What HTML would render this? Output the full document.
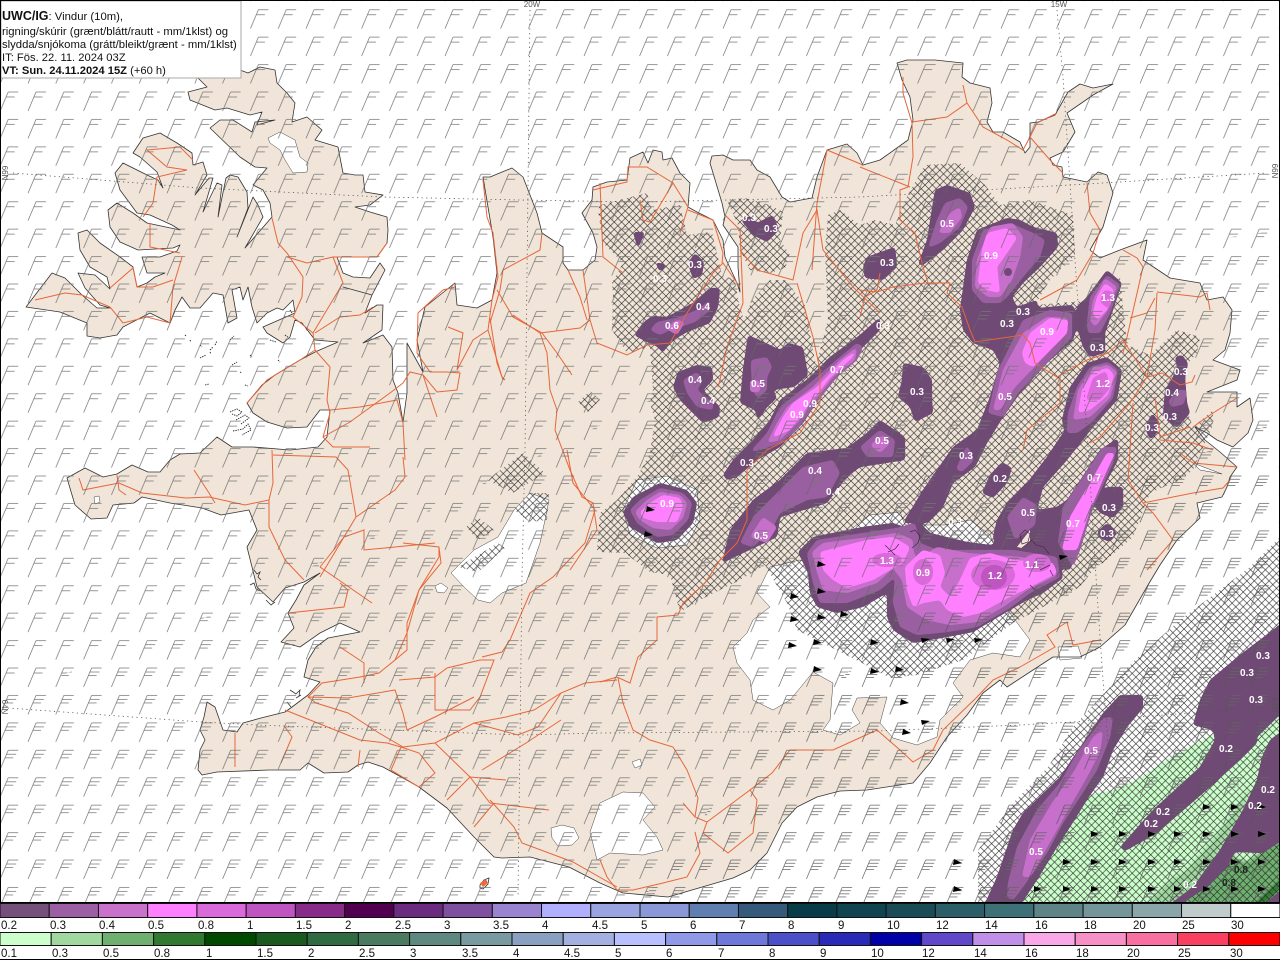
<!DOCTYPE html>
<html><head><meta charset="utf-8"><title>UWC/IG</title>
<style>
html,body{margin:0;padding:0;background:#fff}
svg{display:block;font-family:"Liberation Sans",sans-serif}
.l0{fill:#6f4a74}.l1{fill:#9a5fa0}.l2{fill:#c66fcb}.l3{fill:#ff80ff}.l4{fill:#d96ad9}.l5{fill:#bf55c0}
.v text{font-size:10px;font-weight:bold;fill:#fff;text-anchor:middle}
.r polyline{fill:none;stroke:#e8663a;stroke-width:1}
.g polygon{fill:#fff;stroke:#444;stroke-width:.5}
.p{fill:#000}
.lg{font-size:11.5px;fill:#111}
.gt{font-size:8px;fill:#555}
</style></head><body>
<svg xmlns="http://www.w3.org/2000/svg" width="1280" height="960" viewBox="0 0 1280 960">
<defs>
<filter id="sm" filterUnits="userSpaceOnUse" x="-20" y="-20" width="1330" height="950" color-interpolation-filters="sRGB"><feGaussianBlur stdDeviation="1.8"/><feColorMatrix type="matrix" values="1 0 0 0 0 0 1 0 0 0 0 0 1 0 0 0 0 0 14 -6"/></filter>
<pattern id="hat" width="7.4" height="7.4" patternUnits="userSpaceOnUse"><path d="M0 0L7.4 7.4M7.4 0L0 7.4" stroke="#1a1a1a" stroke-width=".6" fill="none"/></pattern>
<pattern id="b2" x="26" y="90" width="27.8" height="27.43" patternUnits="userSpaceOnUse"><path d="M2 21L10 2" stroke="#666" stroke-width=".65" fill="none"/><path d="M10 2H20M8 7H16.5" stroke="#777" stroke-width=".75" fill="none"/></pattern>
<pattern id="b3" x="26" y="90" width="27.8" height="27.43" patternUnits="userSpaceOnUse"><path d="M2 21L10 2" stroke="#666" stroke-width=".65" fill="none"/><path d="M10 2H20M8.3 6H18M6.9 9.5H15" stroke="#777" stroke-width=".75" fill="none"/></pattern>
<pattern id="b4" x="26" y="90" width="27.8" height="27.43" patternUnits="userSpaceOnUse"><path d="M2 21L10 2" stroke="#555" stroke-width=".65" fill="none"/><path d="M10 2H20M8.6 5.2H18.6M7.3 8.4H17.3M6 11.5H14" stroke="#666" stroke-width=".75" fill="none"/></pattern>
<polygon id="land" points="67,478 85,468 103,477 117,474 132,465 148,472 160,472 170,460 180,454 200,453 217,437 232,447 253,447 290,450 318,447 327,437 330,410 320,410 307,427 287,428 267,422 253,413 247,403 262,385 275,375 300,360 315,352 338,342 315,340 302,323 295,320 290,337 283,343 267,333 263,327 295,313 293,300 283,310 277,308 267,313 257,323 252,307 248,287 243,300 240,287 232,290 237,318 228,323 223,295 213,293 200,308 190,308 182,297 175,310 170,323 150,313 123,327 117,335 100,338 87,336 87,323 60,312 26,307 52,273 65,278 82,295 97,308 110,308 100,305 85,288 78,273 95,275 110,289 107,277 90,267 80,250 78,233 87,230 100,243 120,257 133,267 137,287 147,283 155,277 165,273 147,273 142,257 160,257 177,251 180,245 173,248 138,250 120,242 110,227 108,210 117,203 133,213 147,223 180,230 172,225 150,215 137,213 120,190 115,173 123,163 147,175 158,180 163,188 157,172 140,157 133,153 143,138 160,133 177,143 192,153 193,165 203,162 207,175 195,195 209,178 213,178 203,212 217,183 222,185 218,217 226,178 230,175 238,177 247,192 248,208 237,237 253,197 258,205 263,217 245,248 272,217 270,203 263,190 253,185 267,168 255,167 240,157 210,128 220,120 233,120 252,132 255,122 275,120 257,125 262,112 250,115 227,108 215,110 190,100 188,92 207,87 198,78 205,70 240,70 248,73 260,67 275,70 277,83 287,93 295,103 292,122 307,117 322,130 315,140 338,147 343,173 355,175 363,175 365,192 383,195 370,205 355,207 370,212 387,217 388,230 387,243 377,257 353,257 337,257 343,273 353,277 370,278 380,263 385,270 372,295 343,287 372,295 365,313 377,305 383,305 382,330 363,343 383,335 392,347 393,380 398,393 403,422 407,393 407,343 423,372 417,340 425,307 455,283 457,305 477,308 492,300 497,273 493,237 483,177 490,177 512,168 523,177 537,213 542,233 563,247 563,263 568,270 583,270 595,260 597,247 593,233 582,213 592,200 593,187 607,182 627,180 630,158 643,152 648,163 653,150 662,152 663,160 672,158 680,173 690,183 688,207 697,212 713,220 723,240 725,257 737,283 740,292 738,267 738,247 723,225 725,217 722,203 710,163 712,156 723,155 733,160 750,160 757,170 770,177 782,197 790,202 812,198 817,177 827,150 847,144 857,153 863,165 880,160 908,140 913,120 910,97 902,80 897,63 907,60 935,60 963,63 962,77 970,83 990,88 992,103 987,122 993,132 1003,132 1020,142 1025,153 1030,147 1030,123 1038,122 1055,115 1068,92 1080,84 1093,88 1113,84 1093,95 1083,102 1067,113 1075,132 1063,152 1050,158 1053,165 1062,167 1063,177 1087,182 1098,172 1107,175 1113,193 1103,227 1090,250 1100,258 1120,250 1147,240 1143,260 1170,278 1200,283 1207,300 1223,297 1232,310 1230,333 1225,350 1213,360 1240,370 1237,380 1207,392 1237,392 1237,407 1250,398 1253,420 1248,433 1233,447 1217,440 1207,433 1195,427 1205,440 1220,452 1237,467 1230,477 1227,487 1222,497 1197,503 1200,518 1177,540 1160,565 1148,585 1125,625 1100,647 1080,657 1053,657 1033,670 1007,687 1000,680 983,693 967,715 947,737 930,763 913,783 867,790 840,791 817,797 797,807 782,823 767,853 750,870 733,878 668,897 623,893 600,883 569,867 530,857 502,858 494,857 474,837 447,808 419,787 403,778 383,767 368,762 358,765 348,772 324,773 308,763 300,770 269,770 217,772 202,775 198,770 200,750 205,740 200,730 204,717 207,702 215,707 223,730 237,732 243,723 261,718 285,712 292,707 308,695 320,682 304,677 308,660 316,647 328,638 360,632 340,623 320,633 300,647 281,642 294,628 288,613 296,600 304,585 320,573 304,582 285,588 273,602 257,587 251,563 247,547 257,530 249,510 221,515 202,508 170,503 142,497 134,503 113,505 107,518 91,519 75,505"/>
<clipPath id="z2"><polygon points="0,0 1280,0 1280,230 900,285 650,400 450,500 200,620 0,700"/></clipPath>
<clipPath id="z3"><polygon points="1280,230 900,285 650,400 450,500 200,620 0,700 0,903 640,903 760,740 890,640 1050,520 1280,420"/></clipPath>
<clipPath id="z4"><polygon points="640,903 760,740 890,640 1050,520 1280,420 1280,903"/></clipPath>
</defs>

<rect width="1280" height="903" fill="#fff"/>
<use href="#land" fill="#f0e5d8"/>

<!-- glaciers -->
<g class="g">
<polygon points="268,138 280,132 295,140 300,157 308,163 307,172 293,173 285,160 280,150 270,143"/>
<polygon points="451,573 474,550 498,537 514,510 530,493 549,500 545,520 540,543 526,583 502,593 490,603 478,600 464,587"/>
<polygon points="623,510 637,480 667,476 697,490 700,520 687,545 657,548 630,535"/>
<polygon points="770,567 757,593 770,607 753,620 747,633 733,647 737,663 750,680 753,700 773,710 790,700 800,688 813,672 833,683 830,720 823,730 840,735 860,723 852,710 857,698 887,697 880,723 893,738 917,745 937,737 940,720 950,710 963,697 953,683 970,660 993,653 1020,657 1030,640 1000,600 890,590 800,560"/>
<polygon points="850,530 870,515 900,512 905,525 945,525 970,520 990,535 995,548 1010,550 1030,560 1000,570 900,570 850,560"/>
<polygon points="600,803 623,792 643,793 655,807 643,820 657,837 663,850 643,855 610,853 597,860 590,832"/>
<polygon points="551,828 562,825 574,828 579,838 572,845 558,846 552,838"/>
<polygon points="632,762 640,759 642,765 635,768"/>
<polygon points="435,586 441,583 448,588 444,593 437,592"/>
<polygon points="94,497 99,496 100,502 95,504"/>
<polygon points="1058,647 1078,646 1082,658 1060,660"/>
</g>

<!-- green rain -->
<g filter="url(#sm)">
<polygon fill="#ccffcc" points="1018,910 1037,880 1057,847 1070,827 1090,795 1113,790 1137,780 1167,760 1193,745 1212,735 1250,720 1290,700 1290,910"/>
<polygon fill="#a0d8a0" points="1140,910 1167,883 1187,870 1213,840 1233,813 1250,787 1243,810 1220,850 1193,887 1165,910"/>
<polygon fill="#6fb070" points="1172,910 1193,887 1207,887 1230,853 1235,852 1233,858 1247,862 1273,843 1290,835 1290,870 1257,897 1245,910"/>
<polygon fill="#2f7a30" points="1245,910 1290,870 1290,880 1260,910"/>
</g>

<!-- hatching -->
<g fill="url(#hat)">
<polygon points="600,205 647,193 652,210 680,205 687,235 712,232 722,275 735,280 738,300 744,320 752,300 770,280 785,280 805,305 812,345 816,365 820,350 828,320 825,250 828,215 840,210 860,225 875,220 895,225 905,200 925,165 960,163 985,185 1000,205 1030,200 1073,215 1075,255 1050,280 1035,305 1095,300 1120,277 1127,345 1150,355 1177,330 1200,337 1197,353 1175,378 1193,427 1213,410 1213,425 1193,470 1180,480 1150,493 1133,537 1103,563 1097,565 1080,587 1060,597 1043,607 1013,623 963,660 917,675 890,678 862,663 797,630 787,603 765,565 740,580 720,590 700,600 680,612 670,575 650,572 625,553 600,552 597,550 600,513 617,500 637,477 650,453 655,420 650,403 653,390 650,347 627,353 612,330 613,293 612,283 623,263 603,243 598,210"/>
<polygon points="727,200 745,198 770,205 783,212 780,240 790,255 785,268 770,273 750,270 740,250 738,225"/>
<polygon points="487,480 523,453 545,473 513,493"/>
<polygon points="514,510 530,493 549,493 547,520 530,522"/>
<polygon points="458,567 498,543 505,548 478,572"/>
<polygon points="466,527 478,517 494,530 478,540"/>
<polygon points="578,402 590,391 600,400 588,412"/>
<polygon points="1280,537 1250,567 1180,620 1135,660 1098,700 1073,727 1048,767 1013,803 978,850 978,903 1280,903"/>
</g>

<!-- snow/sleet shades -->
<g>
<g class="l0" filter="url(#sm)">
<polygon points="634,335 643,323 652,316 667,317 693,303 710,288 720,288 718,307 710,323 687,332 670,342 663,353 658,347 643,340"/>
<polygon points="741,220 750,216 757,223 773,215 779,230 767,242 753,235"/>
<polygon points="688,263 695,253 704,262 702,275 693,279"/>
<polygon points="633,232 645,232 638,249"/>
<polygon points="655,262 667,265 660,272"/>
<polygon points="673,387 678,372 697,365 712,367 713,380 703,390 720,407 719,417 703,423 680,400"/>
<polygon points="748,335 770,345 780,350 788,343 803,347 808,375 793,387 773,390 777,398 767,407 758,420 755,410 740,403 743,370"/>
<polygon points="723,475 733,460 753,440 770,420 780,400 807,380 830,357 860,335 880,317 880,330 863,347 843,370 820,397 803,423 780,447 757,460 737,477 727,480"/>
<polygon points="722,563 730,530 753,500 780,480 807,453 847,448 867,433 880,420 905,437 905,460 860,467 847,477 827,503 780,517 777,537 743,553"/>
<polygon points="623,512 633,497 660,483 687,490 697,503 693,523 677,540 657,543 630,527"/>
<polygon points="918,265 927,240 935,190 947,185 970,193 975,207 963,230 943,250 923,265"/>
<polygon points="863,267 867,257 895,247 897,267 883,280 865,278"/>
<polygon points="960,310 967,260 977,230 1007,218 1020,220 1033,227 1057,233 1058,247 1040,267 1023,283 1012,297 1017,307 1037,300 1038,308 1033,333 993,350 973,343 963,330"/>
<polygon points="1038,308 1073,305 1078,323 1073,340 1047,363 1020,393 1003,417 987,443 975,467 953,483 943,507 927,523 903,523 923,490 953,447 977,430 990,397 1000,363 993,350"/>
<polygon points="1077,307 1087,297 1107,270 1122,283 1113,310 1105,333 1105,353 1090,357 1083,347 1077,327"/>
<polygon points="1067,443 1062,420 1070,387 1087,363 1107,357 1122,370 1117,400 1093,427 1077,440"/>
<polygon points="993,537 997,520 1007,503 1027,483 1047,457 1063,433 1093,420 1093,427 1067,460 1043,487 1037,510 1057,507 1067,500 1087,470 1100,450 1118,438 1118,460 1093,507 1083,537 1070,570 1000,560"/>
<polygon points="903,363 923,367 932,380 932,400 933,413 915,422 910,407 898,397 902,380"/>
<polygon points="982,493 990,475 1002,462 1012,468 1007,483 993,498"/>
<polygon points="1107,487 1123,487 1123,507 1113,518 1100,513 1092,502"/>
<polygon points="1097,532 1107,523 1117,533 1110,542 1100,538"/>
<polygon points="1175,357 1182,355 1188,363 1185,378 1187,403 1190,413 1177,428 1163,417 1165,390 1173,377 1177,367"/>
<polygon points="1145,428 1152,413 1160,423 1157,433 1150,440"/>
<polygon points="798,552 813,537 863,527 893,523 907,528 920,523 930,533 967,542 990,545 1003,542 1030,543 1060,540 1057,550 1063,578 1043,593 1027,600 993,620 973,632 947,637 913,643 893,630 887,617 887,593 863,607 837,613 817,607 810,593 808,573"/>
<polygon points="982,910 997,877 1013,830 1023,813 1060,777 1087,737 1103,713 1120,695 1143,695 1143,708 1127,727 1113,750 1103,777 1090,795 1070,827 1057,847 1037,880 1017,910"/>
<polygon points="1193,725 1213,730 1215,740 1200,767 1153,810 1120,847 1125,851 1157,833 1180,813 1210,787 1240,760 1257,743 1257,737 1290,705 1290,617 1240,655 1210,680 1200,700"/>
<polygon points="1270,740 1290,725 1290,835 1263,853 1235,852 1227,867 1207,887 1172,910 1162,910 1193,887 1220,850 1243,810 1257,780 1262,757"/>
<polygon points="1258,910 1290,882 1290,910"/>
</g>
<g class="l1" filter="url(#sm)">
<polygon points="650,330 657,322 677,318 697,310 710,300 710,310 695,322 670,330 660,335"/>
<polygon points="683,380 697,372 703,380 697,390 713,403 713,410 697,407 687,393"/>
<polygon points="751,360 767,357 772,367 767,377 767,390 758,398 752,390"/>
<polygon points="750,452 767,433 780,407 810,383 840,357 857,343 863,347 857,360 837,377 813,407 797,430 780,443 760,450"/>
<polygon points="740,543 753,517 780,490 803,467 833,460 840,473 827,497 807,500 780,513 773,527 753,547"/>
<polygon points="860,447 880,430 895,440 893,457 867,457"/>
<polygon points="630,510 640,500 660,488 683,493 692,503 688,520 673,535 657,537 637,523"/>
<polygon points="928,248 937,220 945,203 960,198 968,207 960,227 940,243"/>
<polygon points="972,290 972,260 983,230 1010,223 1033,233 1045,240 1040,257 1023,277 1007,297 1000,303 983,303"/>
<polygon points="988,413 998,370 1023,320 1050,310 1072,313 1072,337 1047,363 1018,393 1003,417"/>
<polygon points="1087,323 1090,297 1107,275 1120,285 1110,313 1100,333 1088,333"/>
<polygon points="1067,433 1068,413 1077,387 1090,367 1108,362 1118,370 1113,398 1092,422 1077,433"/>
<polygon points="956,469 967,445 974,460 962,472"/>
<polygon points="1007,517 1023,497 1037,505 1035,525 1015,540"/>
<polygon points="1058,543 1063,507 1083,477 1103,447 1117,447 1113,463 1093,507 1080,550 1073,567"/>
<polygon points="807,553 817,540 870,532 897,528 915,523 920,543 937,550 967,550 1013,550 1057,557 1060,577 1030,593 1010,608 977,627 947,632 917,635 900,627 893,603 895,577 880,590 847,603 820,603 813,583"/>
<polygon points="1008,883 1017,847 1037,810 1060,783 1077,753 1103,718 1113,717 1110,737 1097,770 1080,797 1063,823 1047,853 1023,887 1013,900 1007,897"/>
<polygon points="1168,402 1178,390 1187,390 1184,404 1172,407"/>
</g>
<g class="l2" filter="url(#sm)">
<polygon points="665,328 677,320 685,322 677,335"/>
<polygon points="750,380 760,381 760,392 750,392"/>
<polygon points="767,443 777,423 787,407 813,387 840,360 857,347 855,360 833,377 810,407 797,423 780,440"/>
<polygon points="750,537 763,517 777,527 767,543"/>
<polygon points="870,445 883,435 890,443 880,453"/>
<polygon points="635,512 647,500 660,492 680,495 687,503 683,518 670,530 653,528 640,520"/>
<polygon points="938,233 950,213 960,207 962,217 950,233"/>
<polygon points="975,287 977,260 990,227 1013,223 1023,237 1020,257 1012,280 1000,297 988,297"/>
<polygon points="993,410 1003,370 1023,333 1047,317 1068,318 1067,333 1043,358 1015,387 1000,410"/>
<polygon points="1090,320 1093,300 1105,278 1117,287 1108,310 1095,327"/>
<polygon points="1073,420 1078,390 1093,367 1108,365 1117,372 1110,398 1090,417"/>
<polygon points="812,552 823,543 870,537 897,533 913,540 913,550 917,560 937,547 967,553 993,555 1020,557 1053,563 1057,575 1027,590 1003,607 977,622 950,625 927,620 907,607 902,580 893,568 877,583 847,593 823,590 817,572"/>
<polygon points="1022,877 1030,840 1052,803 1075,770 1093,737 1103,730 1100,752 1087,777 1072,803 1053,837 1030,877"/>
</g>
<g class="l3" filter="url(#sm)">
<polygon points="772,438 783,417 793,403 817,387 843,360 857,350 853,357 830,378 810,403 790,430"/>
<polygon points="640,512 650,503 663,495 680,498 683,507 677,522 657,522 643,518"/>
<polygon points="978,283 982,250 987,233 1007,228 1017,238 1007,253 997,267 1000,293 987,290"/>
<polygon points="1022,353 1030,333 1050,318 1068,320 1067,333 1047,353 1033,367 1025,363"/>
<polygon points="1093,313 1097,297 1105,283 1114,290 1107,310 1097,320"/>
<polygon points="1078,413 1082,390 1093,372 1108,368 1114,375 1108,395 1090,410"/>
<polygon points="1062,550 1070,517 1090,483 1107,453 1115,453 1107,470 1090,510 1077,550"/>
<polygon points="820,552 867,540 893,537 910,547 903,563 890,570 873,580 847,588 833,580 823,570"/>
<polygon points="905,567 923,550 940,555 945,573 940,587 950,597 960,580 970,558 990,553 1013,560 1053,563 1057,573 1030,587 1010,597 980,613 963,617 947,610 940,600 923,603 913,607 907,590"/>
</g>
<g class="l4" filter="url(#sm)">
<polygon points="1100,302 1104,290 1114,292 1109,309"/>
<polygon points="1086,400 1093,378 1106,371 1110,388 1100,400"/>
<ellipse cx="993" cy="575" rx="22" ry="15"/><ellipse cx="887" cy="560" rx="15" ry="7"/><ellipse cx="923" cy="572" rx="10" ry="13"/><ellipse cx="1037" cy="563" rx="14" ry="9"/>
</g>
<g class="l5" filter="url(#sm)"><ellipse cx="994" cy="577" rx="13" ry="12"/></g>
<ellipse cx="1008" cy="272" rx="4" ry="4" fill="#6f4a74"/>
<polygon points="1017,547 1030,530 1030,541 1022,548" fill="#f0e5d8"/>
</g>

<!-- coast on top -->
<use href="#land" fill="none" stroke="#333" stroke-width=".8" stroke-linejoin="round"/>

<!-- coastal specks -->
<path d="M230,412l7,-3 5,3 -5,4 -5,-2M236,420l9,-5 4,3 -8,6M233,431l10,-2 5,-5 3,6 -9,5M210,352l1,2M190,340l1,2M200,345l2,2M210,350l3,-3M215,345l2,-4M230,340l4,-4M200,358l6,-3M185,335l1,1M232,365l5,-3M250,355l2,2M278,360l2,2M285,335l4,3M205,385l4,-1M240,372l2,1M290,310l2,3M270,340l6,2M245,385l3,1" stroke="#222" stroke-width=".9" stroke-dasharray="1.4 1" fill="none"/>
<path d="M254,570l3,4 3,-2 -2,5 3,3M250,585l4,-2 2,6 5,2M266,600l5,5 4,-3M290,690l6,4 4,-4 -1,6M296,698l5,-3M287,702l4,5M480,885l4,-5 5,-2 -1,6 -5,5 -3,-1z" stroke="#333" stroke-width=".8" fill="none"/>
<path d="M480,883l6,-4 2,4 -5,4z" fill="#e96a3c"/>
<polygon points="1193,463 1222,474 1200,470" fill="#fff" stroke="#333" stroke-width=".5"/>
<path d="M1020,535l5,-5 5,4 -2,8 -6,2zM1022,548l10,-8 4,5 8,2 5,7M910,532l5,-2 5,6 -2,7 -6,5M888,552l7,-3 4,-5M885,545l10,10M1040,570l10,-5M1030,585l5,5M1050,570l3,6" stroke="#4a2a4a" stroke-width=".7" fill="none"/>

<!-- roads -->
<g class="r">
<polyline points="35,300 65,293 82,295 110,307 123,323 147,317 170,323 173,287 182,257"/>
<polyline points="110,288 133,268 137,287 153,287 173,280"/>
<polyline points="150,223 150,247 180,253"/>
<polyline points="143,217 153,203 157,177 187,170 167,167 147,150 180,147 193,160"/>
<polyline points="272,218 278,243 287,253 303,277 302,297 293,317 313,333 343,283 333,257 307,263 287,257"/>
<polyline points="333,257 377,257 387,243"/>
<polyline points="315,350 330,367 327,400 330,413 323,437 333,447 370,447"/>
<polyline points="247,403 267,380 300,360 315,350"/>
<polyline points="315,333 340,317 360,315 373,307"/>
<polyline points="313,333 315,350"/>
<polyline points="330,410 360,407 397,400 403,423 405,460"/>
<polyline points="323,437 350,422 390,393 403,383 410,372 423,375 437,417"/>
<polyline points="423,375 437,392 457,390 460,373 447,372 430,372 417,353 418,313 443,290 455,287"/>
<polyline points="448,327 463,333 457,370 473,340 488,330 502,377 505,380"/>
<polyline points="488,330 492,300 498,277 493,233 487,217 483,180"/>
<polyline points="490,323 500,290 503,270 540,250 542,233"/>
<polyline points="490,318 497,363 503,380"/>
<polyline points="513,315 540,333 547,353 550,390 557,410 555,430 570,470 582,497 593,503 597,530 570,570"/>
<polyline points="540,333 580,328 590,320 583,270"/>
<polyline points="590,320 597,343 627,355 647,345 670,343 687,313 713,273 723,263 740,287"/>
<polyline points="497,290 513,317 542,333 557,353 572,375"/>
<polyline points="568,270 580,297 587,320"/>
<polyline points="600,183 603,257 623,273"/>
<polyline points="593,190 627,182 628,167 647,167 673,183 688,207 680,233"/>
<polyline points="640,200 643,220 650,222 673,183"/>
<polyline points="688,210 713,220 723,253 722,263"/>
<polyline points="725,215 740,230 742,277 743,303 727,347 720,380 718,387"/>
<polyline points="740,250 757,270 793,280 803,233 817,210 823,250 853,287 880,313"/>
<polyline points="812,270 817,203 827,150 863,165"/>
<polyline points="797,283 813,337 820,370 820,403 800,433 767,450 747,470 747,520 737,543 720,560 705,583 683,603 678,615 657,617 657,640 638,657 630,683 617,677 600,682"/>
<polyline points="618,678 623,703 633,730 650,740 673,747 687,770 698,798 695,817 707,822 703,833 728,853 753,833 757,800 750,790 772,773 790,750 833,750 877,730 900,750 913,762 933,750 943,730 977,697 993,680 1020,667"/>
<polyline points="707,822 750,790"/>
<polyline points="695,817 683,803"/>
<polyline points="695,832 700,853 687,877 663,883 633,890 617,890 607,877 600,860"/>
<polyline points="617,680 585,683 561,693 538,727 518,735 474,723 435,743 403,747 379,733 348,713 316,703 308,697 322,683 360,677 379,673 395,660 407,633 419,590 439,557 439,547 403,543"/>
<polyline points="308,697 348,698 395,690 403,713 407,730 435,717 474,697"/>
<polyline points="399,680 435,677 447,668 480,660 494,660 480,697 470,710 435,710 435,673"/>
<polyline points="474,723 506,717 534,710 561,693"/>
<polyline points="401,747 391,770 419,787 435,773 419,753 401,747"/>
<polyline points="435,743 470,777 490,803 549,810"/>
<polyline points="490,800 514,827 522,843 573,862 617,887"/>
<polyline points="447,800 470,777 506,780"/>
<polyline points="474,827 494,803"/>
<polyline points="482,770 526,743 561,720"/>
<polyline points="79,478 83,490 119,483 142,493 186,498 209,497 245,505 269,500 273,483 272,450"/>
<polyline points="117,475 119,490 126,495"/>
<polyline points="194,470 209,493 215,503"/>
<polyline points="269,500 269,527 285,560 304,580"/>
<polyline points="320,577 356,517 348,470 336,457 273,455"/>
<polyline points="356,517 395,490 405,477 403,457"/>
<polyline points="320,567 344,537 364,530 364,550 435,543"/>
<polyline points="439,547 441,563 419,590 407,623 407,650 395,660"/>
<polyline points="320,567 372,603"/>
<polyline points="288,613 344,607 348,590 340,583"/>
<polyline points="340,647 364,663 364,683"/>
<polyline points="567,450 573,483 595,510 585,543 553,577 530,593 510,640 502,652 482,657"/>
<polyline points="235,733 235,767"/>
<polyline points="285,727 292,737 281,763"/>
<polyline points="360,750 358,767"/>
<polyline points="285,710 360,740 387,743 401,747"/>
<polyline points="903,77 903,93 912,123 913,157 908,187 900,190 900,220 915,233 923,267 928,283 950,283 947,293 962,307 970,330 975,342 1023,335 1030,343 1035,363 1057,377 1087,360 1108,353 1123,340 1147,377"/>
<polyline points="912,122 947,117 967,103 963,85"/>
<polyline points="967,103 983,127 1007,140 1023,150 1030,137 1050,160 1063,173"/>
<polyline points="1030,137 1037,123 1057,113"/>
<polyline points="910,187 860,167"/>
<polyline points="925,283 893,287 877,292 860,290"/>
<polyline points="880,273 877,290 865,297 860,317"/>
<polyline points="1087,183 1090,213 1100,230 1093,253 1077,280 1040,300"/>
<polyline points="1123,250 1137,258 1143,267 1127,337 1123,353"/>
<polyline points="1157,293 1155,330 1147,377 1130,403 1100,437 1090,443"/>
<polyline points="1157,292 1200,297 1207,293 1210,310"/>
<polyline points="1130,318 1147,313 1155,298"/>
<polyline points="1148,377 1162,373 1180,385 1192,382 1195,375"/>
<polyline points="1155,397 1160,437 1190,427"/>
<polyline points="1193,427 1213,413 1237,398"/>
<polyline points="1160,440 1193,443 1213,450"/>
<polyline points="1180,453 1193,463 1237,467"/>
<polyline points="1133,403 1128,480 1143,503 1193,493 1223,488 1230,480"/>
<polyline points="1143,503 1153,513 1173,540 1147,570"/>
<polyline points="1060,377 1060,403 1027,430 1023,450"/>
<polyline points="1020,667 1055,647 1047,635 1067,622 1073,645 1100,640"/>
</g>

<!-- graticule -->
<g fill="none" stroke="#555" stroke-width=".8" stroke-dasharray="1.2 3.4">
<polyline points="13,173 200,188 383,197 520,200 640,202 860,197 1070,185 1267,173"/>
<polyline points="8,708 201,722 257,725 522,735 600,733 877,731 1020,725 1073,722 1267,707"/>
<polyline points="530,10 525,450 522,577 518,897"/>
<polyline points="1057,10 1063,77 1070,183 1075,260 1088,447 1097,593 1103,680 1110,770 1118,900"/>
</g>

<!-- wind barbs -->
<rect width="1280" height="903" fill="url(#b2)" clip-path="url(#z2)"/>
<rect width="1280" height="903" fill="url(#b3)" clip-path="url(#z3)"/>
<rect width="1280" height="903" fill="url(#b4)" clip-path="url(#z4)"/>

<!-- pennants -->
<g class="p">
<path d="M647,506l8,4 -9,2zM645,531l8,4 -9,2z"/>
<path d="M818,561l8,4 -9,2zM818,588l8,4 -9,2zM791,593l8,4 -9,2zM791,616l8,4 -9,2zM818,614l8,4 -9,2zM841,611l8,4 -9,2zM789,642l8,4 -9,2zM814,639l8,4 -9,2zM871,639l8,4 -9,2zM814,666l8,4 -9,2zM871,668l8,4 -9,2zM896,666l8,4 -9,2zM921,638l9,1 -8,4zM946,638l9,1 -8,4zM974,638l9,1 -8,4zM1059,555l9,1 -8,4zM901,699l8,4 -9,2zM921,720l9,1 -8,4zM903,729l8,4 -9,2z"/>
<path d="M954,859l8,4 -9,2zM954,886l8,4 -9,2z"/>
<path d="M1203,804l8,3 -8,3zM1231,804l8,3 -8,3zM1258,804l8,3 -8,3z"/>
<path d="M1091,831l8,3 -8,3zM1119,831l8,3 -8,3zM1148,831l8,3 -8,3zM1174,831l8,3 -8,3zM1203,831l8,3 -8,3zM1231,831l8,3 -8,3zM1258,831l8,3 -8,3z"/>
<path d="M1063,859l8,3 -8,3zM1091,859l8,3 -8,3zM1119,859l8,3 -8,3zM1148,859l8,3 -8,3zM1174,859l8,3 -8,3zM1203,859l8,3 -8,3zM1231,859l8,3 -8,3zM1258,859l8,3 -8,3z"/>
<path d="M1034,886l8,3 -8,3zM1063,886l8,3 -8,3zM1091,886l8,3 -8,3zM1119,886l8,3 -8,3zM1148,886l8,3 -8,3zM1174,886l8,3 -8,3zM1203,886l8,3 -8,3zM1231,886l8,3 -8,3zM1258,886l8,3 -8,3z"/>
</g>

<!-- values -->
<g class="v">
<text x="667" y="507">0.9</text><text x="672" y="329">0.6</text><text x="703" y="310">0.4</text><text x="695" y="383">0.4</text><text x="708" y="404">0.4</text><text x="758" y="387">0.5</text><text x="837" y="373">0.7</text><text x="810" y="407">0.9</text><text x="797" y="418">0.9</text><text x="747" y="466">0.3</text><text x="815" y="474">0.4</text><text x="833" y="495">0.4</text><text x="882" y="444">0.5</text><text x="917" y="395">0.3</text><text x="966" y="459">0.3</text><text x="1000" y="482">0.2</text><text x="1028" y="516">0.5</text><text x="1073" y="527">0.7</text><text x="1109" y="511">0.3</text><text x="1107" y="537">0.3</text><text x="1094" y="481">0.7</text><text x="1005" y="400">0.5</text><text x="1047" y="335">0.9</text><text x="1007" y="327">0.3</text><text x="1023" y="315">0.3</text><text x="1097" y="351">0.3</text><text x="1108" y="301">1.3</text><text x="1103" y="387">1.2</text><text x="991" y="259">0.9</text><text x="947" y="227">0.5</text><text x="887" y="266">0.3</text><text x="883" y="329">0.3</text><text x="771" y="232">0.3</text><text x="749" y="221">0.3</text><text x="695" y="268">0.3</text><text x="660" y="282">0.3</text><text x="1181" y="375">0.3</text><text x="1172" y="396">0.4</text><text x="1170" y="420">0.3</text><text x="1152" y="431">0.3</text><text x="887" y="564">1.3</text><text x="923" y="576">0.9</text><text x="995" y="579">1.2</text><text x="1032" y="568">1.1</text><text x="761" y="539">0.5</text><text x="955" y="525">0.3</text><text x="1091" y="754">0.5</text><text x="1036" y="855">0.5</text><text x="1263" y="659">0.3</text><text x="1247" y="676">0.3</text><text x="1256" y="703">0.3</text><text x="1226" y="752">0.2</text><text x="1268" y="793">0.2</text><text x="1255" y="809">0.2</text><text x="1163" y="815">0.2</text><text x="1151" y="827">0.2</text><text x="1190" y="888">0.2</text>
<text x="1241" y="873" style="fill:#222">0.8</text><text x="1229" y="886" style="fill:#222">0.8</text>
</g>

<!-- graticule labels -->
<text class="gt" x="532" y="7" text-anchor="middle">20W</text>
<text class="gt" x="1059" y="7" text-anchor="middle">15W</text>
<text class="gt" transform="translate(2,173) rotate(90)" text-anchor="middle">66N</text>
<text class="gt" transform="translate(2,707) rotate(90)" text-anchor="middle">64N</text>
<text class="gt" transform="translate(1272,171) rotate(90)" text-anchor="middle">66N</text>
<text class="gt" transform="translate(1272,705) rotate(90)" text-anchor="middle">64N</text>

<!-- info box -->
<rect x="1" y="1" width="240" height="77" fill="#fff" stroke="#aaa" stroke-width="1"/>
<text x="2" y="20" font-size="11.3" fill="#111"><tspan font-weight="bold" font-size="12.5">UWC/IG</tspan>: Vindur (10m),</text>
<text x="2" y="35" font-size="11.3" fill="#111">rigning/skúrir (grænt/blátt/rautt - mm/1klst) og</text>
<text x="2" y="48" font-size="11.3" fill="#111">slydda/snjókoma (grátt/bleikt/grænt - mm/1klst)</text>
<text x="2" y="61" font-size="11.2" fill="#111">IT: Fös. 22. 11. 2024 03Z</text>
<text x="2" y="74" font-size="11.2" fill="#111"><tspan font-weight="bold">VT: Sun. 24.11.2024 15Z</tspan> (+60 h)</text>

<rect x=".5" y=".5" width="1279" height="902" fill="none" stroke="#000"/>

<!-- legend -->
<rect y="903" width="1280" height="57" fill="#fff"/>
<g stroke="#111" stroke-width="1">
<rect x="0" y="903.5" width="49.23" height="14" fill="#74507a"/><rect x="49.23" y="903.5" width="49.23" height="14" fill="#9c5fa3"/><rect x="98.46" y="903.5" width="49.23" height="14" fill="#c872cc"/><rect x="147.69" y="903.5" width="49.23" height="14" fill="#ff80ff"/><rect x="196.92" y="903.5" width="49.23" height="14" fill="#da6adc"/><rect x="246.15" y="903.5" width="49.23" height="14" fill="#bf55c2"/><rect x="295.38" y="903.5" width="49.23" height="14" fill="#872a8a"/><rect x="344.62" y="903.5" width="49.23" height="14" fill="#50004f"/><rect x="393.85" y="903.5" width="49.23" height="14" fill="#6b2c80"/><rect x="443.08" y="903.5" width="49.23" height="14" fill="#7f509f"/><rect x="492.31" y="903.5" width="49.23" height="14" fill="#9a83d0"/><rect x="541.54" y="903.5" width="49.23" height="14" fill="#b0b0ff"/><rect x="590.77" y="903.5" width="49.23" height="14" fill="#99a4e0"/><rect x="640" y="903.5" width="49.23" height="14" fill="#8a98d8"/><rect x="689.23" y="903.5" width="49.23" height="14" fill="#5f7fb0"/><rect x="738.46" y="903.5" width="49.23" height="14" fill="#365a7c"/><rect x="787.69" y="903.5" width="49.23" height="14" fill="#073c48"/><rect x="836.92" y="903.5" width="49.23" height="14" fill="#0f4450"/><rect x="886.15" y="903.5" width="49.23" height="14" fill="#1a4c58"/><rect x="935.38" y="903.5" width="49.23" height="14" fill="#2a5e68"/><rect x="984.62" y="903.5" width="49.23" height="14" fill="#3e7078"/><rect x="1033.85" y="903.5" width="49.23" height="14" fill="#5e8488"/><rect x="1083.08" y="903.5" width="49.23" height="14" fill="#74969a"/><rect x="1132.31" y="903.5" width="49.23" height="14" fill="#8aa6a8"/><rect x="1181.54" y="903.5" width="49.23" height="14" fill="#c0cccc"/><rect x="1230.77" y="903.5" width="49.23" height="14" fill="#fff"/>
<rect x="0" y="932.5" width="51.2" height="13" fill="#ccffcc"/><rect x="51.2" y="932.5" width="51.2" height="13" fill="#a0d8a0"/><rect x="102.4" y="932.5" width="51.2" height="13" fill="#6fb070"/><rect x="153.6" y="932.5" width="51.2" height="13" fill="#2f7a30"/><rect x="204.8" y="932.5" width="51.2" height="13" fill="#004a00"/><rect x="256" y="932.5" width="51.2" height="13" fill="#1a5a20"/><rect x="307.2" y="932.5" width="51.2" height="13" fill="#2f6a40"/><rect x="358.4" y="932.5" width="51.2" height="13" fill="#4a7a60"/><rect x="409.6" y="932.5" width="51.2" height="13" fill="#5e8880"/><rect x="460.8" y="932.5" width="51.2" height="13" fill="#789aa0"/><rect x="512" y="932.5" width="51.2" height="13" fill="#8aa0c0"/><rect x="563.2" y="932.5" width="51.2" height="13" fill="#a4b0e0"/><rect x="614.4" y="932.5" width="51.2" height="13" fill="#b8c0ff"/><rect x="665.6" y="932.5" width="51.2" height="13" fill="#9098e8"/><rect x="716.8" y="932.5" width="51.2" height="13" fill="#6e78d8"/><rect x="768" y="932.5" width="51.2" height="13" fill="#4c50c8"/><rect x="819.2" y="932.5" width="51.2" height="13" fill="#2a2ab8"/><rect x="870.4" y="932.5" width="51.2" height="13" fill="#0000a8"/><rect x="921.6" y="932.5" width="51.2" height="13" fill="#6048c8"/><rect x="972.8" y="932.5" width="51.2" height="13" fill="#c090e8"/><rect x="1024" y="932.5" width="51.2" height="13" fill="#f8a8e8"/><rect x="1075.2" y="932.5" width="51.2" height="13" fill="#f890c8"/><rect x="1126.4" y="932.5" width="51.2" height="13" fill="#f870a0"/><rect x="1177.6" y="932.5" width="51.2" height="13" fill="#f84060"/><rect x="1228.8" y="932.5" width="51.2" height="13" fill="#ff0000"/>
</g>
<path d="M0,959.5H1280" stroke="#000"/>
<g class="lg">
<text x="1" y="929">0.2</text><text x="50" y="929">0.3</text><text x="99" y="929">0.4</text><text x="148" y="929">0.5</text><text x="198" y="929">0.8</text><text x="247" y="929">1</text><text x="296" y="929">1.5</text><text x="345" y="929">2</text><text x="395" y="929">2.5</text><text x="444" y="929">3</text><text x="493" y="929">3.5</text><text x="542" y="929">4</text><text x="592" y="929">4.5</text><text x="641" y="929">5</text><text x="690" y="929">6</text><text x="739" y="929">7</text><text x="788" y="929">8</text><text x="838" y="929">9</text><text x="887" y="929">10</text><text x="936" y="929">12</text><text x="985" y="929">14</text><text x="1035" y="929">16</text><text x="1084" y="929">18</text><text x="1133" y="929">20</text><text x="1182" y="929">25</text><text x="1231" y="929">30</text>
<text x="1" y="957">0.1</text><text x="52" y="957">0.3</text><text x="103" y="957">0.5</text><text x="154" y="957">0.8</text><text x="206" y="957">1</text><text x="257" y="957">1.5</text><text x="308" y="957">2</text><text x="359" y="957">2.5</text><text x="410" y="957">3</text><text x="462" y="957">3.5</text><text x="513" y="957">4</text><text x="564" y="957">4.5</text><text x="615" y="957">5</text><text x="666" y="957">6</text><text x="718" y="957">7</text><text x="769" y="957">8</text><text x="820" y="957">9</text><text x="871" y="957">10</text><text x="922" y="957">12</text><text x="974" y="957">14</text><text x="1025" y="957">16</text><text x="1076" y="957">18</text><text x="1127" y="957">20</text><text x="1178" y="957">25</text><text x="1230" y="957">30</text>
</g>
</svg>
</body></html>
